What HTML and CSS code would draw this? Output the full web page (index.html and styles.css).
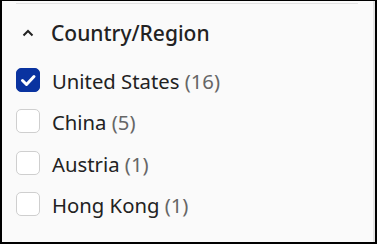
FILE: index.html
```
<!DOCTYPE html>
<html lang="en">
<head>
    <meta charset="UTF-8">
    <meta name="viewport" content="width=device-width, initial-scale=1.0">
    <title>Country/Region filter</title>
    <link rel="stylesheet" href="styles.css">
</head>
<body>
    <div class="panel">
        <div class="divider"></div>

        <div class="filter-head">
            <svg class="chevron" width="12" height="8" viewBox="0 0 12 8">
                <polyline points="1.5,6.5 6,2 10.5,6.5" fill="none" stroke="#222" stroke-width="2"/>
            </svg>
            <span class="filter-title">Country/Region</span>
        </div>

        <ul class="options">
            <li class="option">
                <span class="box checked">
                    <svg width="24" height="24" viewBox="0 0 24 24">
                        <polyline points="6.5,12.5 10.5,16.5 18,8.5" fill="none" stroke="#fff" stroke-width="3" stroke-linecap="round" stroke-linejoin="round"/>
                    </svg>
                </span>
                <span class="name">United States <span class="count">(16)</span></span>
            </li>
            <li class="option">
                <span class="box"></span>
                <span class="name">China <span class="count">(5)</span></span>
            </li>
            <li class="option">
                <span class="box"></span>
                <span class="name">Austria <span class="count">(1)</span></span>
            </li>
            <li class="option">
                <span class="box"></span>
                <span class="name">Hong Kong <span class="count">(1)</span></span>
            </li>
        </ul>
    </div>
</body>
</html>
```

FILE: styles.css
```
html, body {
    margin: 0;
    padding: 0;
}
body {
    font-family: "Noto Sans", "Open Sans", sans-serif;
    color: #222;
}
.panel {
    width: 377px;
    height: 244px;
    box-sizing: border-box;
    border-style: solid;
    border-color: #000;
    border-width: 1px 2px 2px 2px;
    background-color: #fafafa;
    box-shadow: inset -2px 0 0 #e4e4e4;
}
.divider {
    height: 1px;
    margin: 2px 17px 0 14px;
    background-color: #e2e2e2;
}
.filter-head {
    display: flex;
    align-items: center;
    padding: 15px 0 12px 20px;
    line-height: 28px;
}
.chevron {
    display: block;
    margin-right: 17px;
}
.filter-title {
    font-size: 21px;
    font-weight: 500;
}
.options {
    list-style: none;
    margin: 0;
    padding: 0 0 0 14px;
}
.option {
    display: flex;
    align-items: center;
    height: 41.5px;
}
.box {
    width: 24px;
    height: 24px;
    box-sizing: border-box;
    border: 1px solid #cfcfcf;
    border-radius: 5px;
    background-color: #fff;
    margin-right: 12px;
    position: relative;
}
.box.checked {
    border-color: #0a33a0;
    background-color: #0a33a0;
}
.box.checked svg {
    position: absolute;
    left: -1px;
    top: -1px;
}
.name {
    font-size: 20.3px;
    line-height: 24px;
    padding-top: 2px;
}
.count {
    color: #666;
}
```
